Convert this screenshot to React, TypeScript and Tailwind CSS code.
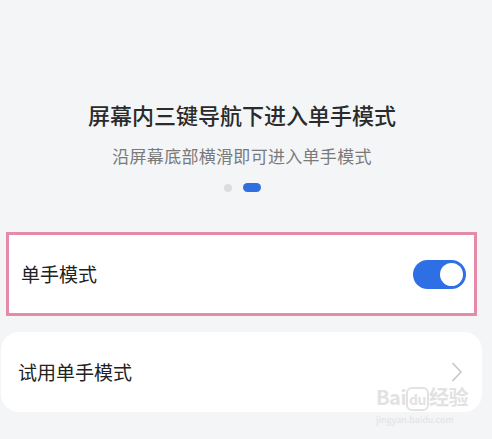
const font = { fontFamily: '"Noto Sans CJK SC", "Noto Sans", sans-serif' };

export default function App() {
  return (
    <div className="relative w-[492px] h-[439px] overflow-hidden bg-[#f4f5f7]" style={font}>
      {/* Header text */}
      <div className="flex flex-col items-center pt-[99px] pr-[8px]">
        <h1 className="text-[22px] leading-[30px] font-medium text-[#2b2b2b]">
          屏幕内三键导航下进入单手模式
        </h1>
        <p className="mt-[15px] text-[17px] leading-[24px] text-[#7a7a7a] tracking-[0.3px]">
          沿屏幕底部横滑即可进入单手模式
        </p>
        <div className="mt-[15px] flex items-center gap-[11px]">
          <span className="w-[8px] h-[8px] rounded-full bg-[#dcdde0]" />
          <span className="w-[18px] h-[9px] rounded-full bg-[#2f6fe0]" />
        </div>
      </div>

      {/* Highlighted toggle row */}
      <div className="mt-[40px] ml-[6px] w-[471px] h-[84px] border-[3px] border-[#e58aa7] bg-white flex items-center justify-between pl-[12px] pr-[8px]">
        <span className="text-[19px] text-[#222]">单手模式</span>
        <div className="w-[53px] h-[29px] rounded-full bg-[#2e6fe6] flex items-center justify-end pr-[3px]">
          <span className="w-[23px] h-[23px] rounded-full bg-white" />
        </div>
      </div>

      {/* Try one-hand mode */}
      <div className="mt-[16px] ml-[1px] w-[481px] h-[80px] rounded-[18px] bg-white flex items-center justify-between pl-[17px] pr-[19px]">
        <span className="text-[19px] text-[#222]">试用单手模式</span>
        <svg width="12" height="20" viewBox="0 0 12 20" fill="none">
          <polyline points="2,1.5 10,10 2,18.5" stroke="#c9c9c9" strokeWidth="1.8" strokeLinecap="round" strokeLinejoin="round" />
        </svg>
      </div>

      {/* Watermark */}
      <div className="absolute left-[376px] top-[386px] flex flex-col items-start text-[#e2e2e2] pointer-events-none">
        <span className="text-[20px] leading-[22px] font-bold tracking-[-0.5px]">
          Bai<span className="text-[14px] px-[1px] border-[2px] border-[#e2e2e2] rounded-[6px]">du</span>经验
        </span>
        <span className="text-[9px] leading-[12px] mt-[4px]">jingyan.baidu.com</span>
      </div>
    </div>
  );
}
